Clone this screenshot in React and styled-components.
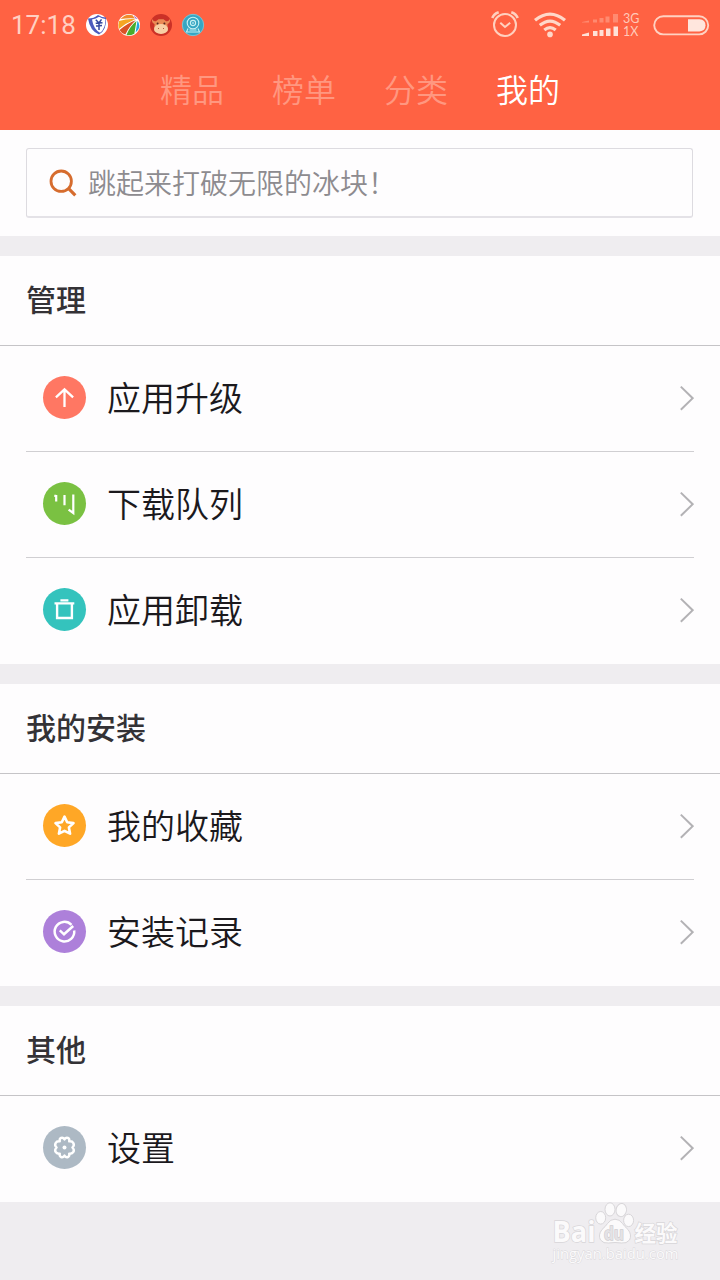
import React from 'react';
import styled, { createGlobalStyle } from 'styled-components';

const GlobalStyle = createGlobalStyle`
  * {
    box-sizing: border-box;
  }
  body {
    margin: 0;
    background: #efedf0;
    font-family: 'Noto Sans CJK SC', sans-serif;
  }
`;

const TABS = ['精品', '榜单', '分类', '我的'];

const SECTIONS = [
  {
    title: '管理',
    items: [
      { label: '应用升级', color: '#ff7763', icon: 'upgrade' },
      { label: '下载队列', color: '#7ac142', icon: 'queue' },
      { label: '应用卸载', color: '#34c3bd', icon: 'uninstall' },
    ],
  },
  {
    title: '我的安装',
    items: [
      { label: '我的收藏', color: '#ffa726', icon: 'favorite' },
      { label: '安装记录', color: '#ad80da', icon: 'history' },
    ],
  },
  {
    title: '其他',
    items: [
      { label: '设置', color: '#adb9c4', icon: 'settings' },
    ],
  },
];

// glyphs drawn inside the 43px round badges
const GLYPHS = {
  upgrade: (
    <path d="M21.5 31V13.8M12.9 21.3L21.5 13.3L30.1 21.3" strokeWidth="2.3" />
  ),
  queue: (
    <path d="M13.2 13V19.4M21.5 13V23.3M30.3 12.6V31L25.6 27.6M11.3 13.8H13.2" strokeWidth="2.2" />
  ),
  uninstall: (
    <path d="M11.5 15.4H31.3M17.4 12.4H25.4M14.1 15.4V30H28.9V15.4" strokeWidth="2.4" />
  ),
  favorite: (
    <path
      d="M21.5 12.6L24.2 18.3L30.5 19.1L25.9 23.4L27.1 29.7L21.5 26.8L15.9 29.7L17.1 23.4L12.5 19.1L18.8 18.3Z"
      strokeWidth="2.6"
      strokeLinejoin="round"
    />
  ),
  history: (
    <path d="M28.5 14.8A9.8 9.8 0 1 0 31.2 20.5M16.8 20.4L21 24.3L30.2 16" strokeWidth="2.5" />
  ),
  settings: (
    <>
      <path
        d="M21.5 13.4C23.5 10.2 27 12 26.2 15.4C30 14.8 32.5 18.4 29.4 21.5C32.5 24.6 30 28.2 26.2 27.6C27 31 23.5 32.8 21.5 29.6C19.5 32.8 16 31 16.8 27.6C13 28.2 10.5 24.6 13.6 21.5C10.5 18.4 13 14.8 16.8 15.4C16 12 19.5 10.2 21.5 13.4Z"
        strokeWidth="2.4"
        strokeLinejoin="round"
      />
      <circle cx="21.5" cy="21.5" r="2" fill="#fff" stroke="none" />
    </>
  ),
};

const AppIcons = () => (
  <AppIconList>
    <svg width="24" height="24" viewBox="0 0 24 24">
      <circle cx="12" cy="12" r="11" fill="#fff" />
      <path d="M3 5.5Q9 5.5 13 2Q17 4.5 21 4.5Q22 17 14 21.5Q5 18 3 5.5Z" fill="#4c5bbd" />
      <path d="M7 6.5Q11 5.8 14 3.8Q17 5.8 20.5 6Q20.5 16 15 19.8Q8.5 16 7 6.5Z" fill="#fff" />
      <path d="M10.8 6.8L14 10L16.5 6.3M10.7 10.2L17.5 9.7M11 13L17 12.5M14 10V17" stroke="#34489f" strokeWidth="1.5" fill="none" />
    </svg>
    <svg width="24" height="24" viewBox="0 0 24 24">
      <circle cx="12" cy="12" r="11" fill="#fff" />
      <path d="M3.5 6Q9 0 15.5 2.3L18 5.5Q11 5 3.5 6Z" fill="#ef8b2c" />
      <path d="M2 8Q11 5.5 18.3 6.3Q9 10 1.8 16Q.7 12 2 8Z" fill="#f5a623" />
      <path d="M2.5 17Q11 10 18.8 7.3Q12.5 13 8.3 21.5Q4 20 2.5 17Z" fill="#d95326" />
      <path d="M9.5 22Q13 13 19.5 8L17.3 20.7Q13 23 9.5 22Z" fill="#46ac2e" />
      <path d="M18.6 19.5L20.5 7.8Q25 14 18.6 19.5Z" fill="#22a7dd" />
      <path d="M16.8 2.6L20.7 6L18.4 5.6Z" fill="#9b5cc5" />
    </svg>
    <svg width="24" height="24" viewBox="0 0 24 24">
      <circle cx="12" cy="12" r="11" fill="#cb3127" />
      <path d="M3 6Q5 9.5 7.5 7.8L9.5 6.3H14.5L16.5 7.8Q19 9.5 21 6Q21.5 10 18.5 11V18Q12 23 5.5 18V11Q2.5 10 3 6Z" fill="#eb8a55" />
      <ellipse cx="12" cy="16" rx="7" ry="5" fill="#f8cfa4" />
      <circle cx="8.6" cy="10.5" r="1" fill="#56281e" />
      <circle cx="15.4" cy="10.5" r="1" fill="#56281e" />
      <path d="M9.5 15V16M14.5 15V16" stroke="#b35a3e" strokeWidth="1" />
    </svg>
    <svg width="24" height="24" viewBox="0 0 24 24" fill="none">
      <circle cx="12" cy="12" r="10.7" fill="#35a6c3" stroke="#79c3d3" />
      <circle cx="12" cy="10" r="5.8" stroke="#c8f0f2" strokeWidth="1.1" />
      <circle cx="12" cy="10" r="2.6" stroke="#c8f0f2" strokeWidth="1.1" />
      <circle cx="12" cy="10" r=".8" fill="#fff" />
      <path d="M7 15.5L5.5 19H18.5L17 15.5M8.5 17H15.5" stroke="#c8f0f2" strokeWidth="1.1" />
    </svg>
  </AppIconList>
);

const AlarmIcon = () => (
  <svg width="28" height="28" viewBox="0 0 28 28" fill="none" stroke="#ffd0bf" strokeWidth="2">
    <circle cx="14" cy="15" r="11" />
    <path d="M9.3 12.7L14 17L19.2 12.7" />
    <path d="M1.3 8Q2.8 3.8 7.7 2.2M20.3 2.2Q25.2 3.8 26.7 8" strokeWidth="2.6" />
  </svg>
);

const WifiIcon = () => (
  <svg width="34" height="26" viewBox="0 0 34 26" fill="none" stroke="#ffd8c9" strokeWidth="3.2">
    <path d="M2 8.2Q17 -4 32 8.2M6.8 13.3Q17 4.8 27.2 13.3M11.3 18Q17 13.3 22.7 18" />
    <circle cx="17" cy="22.4" r="2.8" fill="#ffd8c9" stroke="none" />
  </svg>
);

const SignalIcon = () => (
  <svg width="38" height="26" viewBox="0 0 38 26">
    <path
      d="M1 10L8 8.5V10.5H1ZM12 7.5H16V10.5H12ZM18.5 6H22.5V10.5H18.5ZM24.5 4.5H28.5V10.5H24.5ZM32 2H37V10.5H32Z"
      fill="#ff8a70"
    />
    <path
      d="M1 22.5L8 20.5V24H1ZM12 19H16.5V24H12ZM18.5 18H22.5V24H18.5ZM25 16.5H29.5V24H25ZM32.5 14.5H37V24H32.5Z"
      fill="#ffe1d7"
    />
  </svg>
);

const BatteryIcon = () => (
  <svg width="57" height="21" viewBox="0 0 57 21">
    <rect x="1.2" y="1.2" width="54" height="18.2" rx="9.1" fill="none" stroke="#ffd2c2" strokeWidth="1.9" />
    <path d="M35 4.2H46.5Q52.5 4.6 52.5 10.3Q52.5 16 46.5 16.4H35Z" fill="#ffe6dd" />
  </svg>
);

const SearchIcon = () => (
  <svg width="28" height="28" viewBox="0 0 28 28" fill="none" stroke="#d66c2e">
    <circle cx="12.2" cy="12.2" r="10.2" strokeWidth="2.8" />
    <path d="M19.2 19.2L26.3 26.3" strokeWidth="3.2" />
  </svg>
);

const Chevron = () => (
  <svg width="16" height="26" viewBox="0 0 16 26" fill="none" stroke="#b3b2b5" strokeWidth="2">
    <path d="M2.8 1.6L14.7 13.2L2.8 24.8" />
  </svg>
);

const BaiduMark = () => (
  <Watermark>
    <svg width="136" height="64" viewBox="0 0 136 64" fill="#fbfafb" stroke="#d8d6d9" strokeWidth="1">
      <ellipse cx="54.7" cy="15.8" rx="5" ry="6.3" />
      <ellipse cx="64" cy="7.4" rx="5" ry="6.6" />
      <ellipse cx="75.3" cy="8.1" rx="5.2" ry="6.6" transform="rotate(10 75.3 8.1)" />
      <ellipse cx="82.6" cy="18.4" rx="5" ry="6.2" />
      <path d="M69 17.2Q73.5 17.2 76.5 21.5Q78.5 24.5 82 27.5Q86.2 33 83.5 38Q80.5 41.8 75.5 41Q69 40 62.5 41Q57.5 41.8 54.5 38Q51.8 33 56 27.5Q59.5 24.5 61.5 21.5Q64.5 17.2 69 17.2Z" />
      <WatermarkText x="6.5" y="40" textLength="43" lengthAdjust="spacingAndGlyphs" $size={28}>Bai</WatermarkText>
      <WatermarkText x="58" y="38" textLength="20" lengthAdjust="spacingAndGlyphs" $size={18} $inner>du</WatermarkText>
      <WatermarkText x="88.5" y="39" textLength="43" lengthAdjust="spacingAndGlyphs" $size={22}>经验</WatermarkText>
      <WatermarkText x="6.5" y="56.5" textLength="126" lengthAdjust="spacingAndGlyphs" $size={14} $light>jingyan.baidu.com</WatermarkText>
    </svg>
  </Watermark>
);

const Section = ({ title, items }) => (
  <SectionBox>
    <SectionTitle>{title}</SectionTitle>
    <List>
      {items.map(item => (
        <Row key={item.label}>
          <Badge color={item.color}>
            <svg width="43" height="43" viewBox="0 0 43 43" fill="none" stroke="#fff">
              {GLYPHS[item.icon]}
            </svg>
          </Badge>
          <RowLabel>{item.label}</RowLabel>
          <Chevron />
        </Row>
      ))}
    </List>
  </SectionBox>
);

const App = () => {
  return (
    <Wrapper>
      <GlobalStyle />
      <Header>
        <StatusBar>
          <Clock>17:18</Clock>
          <AppIcons />
          <StatusRight>
            <AlarmIcon />
            <WifiIcon />
            <Network>
              <SignalIcon />
              <NetworkType>
                <span>3G</span>
                <span>1X</span>
              </NetworkType>
            </Network>
            <BatteryIcon />
          </StatusRight>
        </StatusBar>
        <Tabs>
          {TABS.map(tab => (
            <Tab key={tab} $active={tab === '我的'}>{tab}</Tab>
          ))}
        </Tabs>
      </Header>
      <SearchArea>
        <SearchBox>
          <SearchIcon />
          <Placeholder>跳起来打破无限的冰块！</Placeholder>
        </SearchBox>
      </SearchArea>
      {SECTIONS.map(section => <Section key={section.title} {...section} />)}
      <BaiduMark />
    </Wrapper>
  );
};

export default App;

const Wrapper = styled.div`
  position: relative;
  display: flex;
  flex-direction: column;
  gap: 20px;
  width: 720px;
  height: 1280px;
  overflow: hidden;
  background: #efedf0;
`;

const Header = styled.div`
  height: 130px;
  margin-bottom: -20px;
  background: #ff6243;
`;

const StatusBar = styled.div`
  display: flex;
  align-items: center;
  height: 50px;
  padding: 0 10px 0 11px;
`;

const Clock = styled.div`
  width: 74px;
  color: #ffd0c2;
  font-family: Roboto, sans-serif;
  font-size: 26px;
  line-height: 50px;
`;

const AppIconList = styled.div`
  display: flex;
  gap: 8px;
`;

const StatusRight = styled.div`
  display: flex;
  align-items: center;
  margin-left: auto;
  > svg:first-child {
    margin: 0 14px 2px 0;
  }
`;

const Network = styled.div`
  display: flex;
  align-items: center;
  gap: 4px;
  margin: 0 12px 0 14px;
`;

const NetworkType = styled.div`
  display: flex;
  flex-direction: column;
  width: 18px;
  color: #ffc9b9;
  font-family: Lato, sans-serif;
  font-size: 12.5px;
  line-height: 13px;
`;

const Tabs = styled.div`
  display: flex;
  justify-content: center;
  gap: 48px;
  height: 80px;
`;

const Tab = styled.div`
  color: ${props => props.$active ? '#fff' : '#ff9780'};
  font-size: 32px;
  font-weight: 350;
  line-height: 76px;
`;

const SearchArea = styled.div`
  height: 106px;
  padding: 18px 27px 18px 26px;
  background: #fefdfe;
`;

const SearchBox = styled.div`
  display: flex;
  align-items: center;
  height: 70px;
  padding-left: 22px;
  border: 1px solid #dddbe0;
  border-bottom: 2px solid #e4e2e7;
  border-radius: 3px;
`;

const Placeholder = styled.div`
  margin-left: 11px;
  padding-bottom: 2px;
  color: #8d8b8f;
  font-size: 28px;
  font-weight: 350;
  line-height: 64px;
`;

const SectionBox = styled.div`
  background: #fefdfe;
`;

const SectionTitle = styled.div`
  height: 90px;
  padding-left: 26px;
  border-bottom: 1px solid #c5c4c7;
  color: #343236;
  font-size: 30px;
  font-weight: 500;
  line-height: 84px;
`;

const List = styled.div`
  padding: 0 26px;
`;

const Row = styled.div`
  display: flex;
  align-items: center;
  height: 106px;
  padding-left: 16.5px;
  padding-bottom: 2px;
  border-bottom: 1px solid #d0cfd2;
  &:last-child {
    border-bottom-color: transparent;
  }
`;

const Badge = styled.div`
  width: 43px;
  height: 43px;
  border-radius: 50%;
  background: ${props => props.color};
  svg {
    display: block;
  }
`;

const RowLabel = styled.div`
  flex: 1;
  margin-left: 21.5px;
  padding-bottom: 2px;
  color: #1b191d;
  font-size: 34px;
  font-weight: 350;
  line-height: 100px;
`;

const Watermark = styled.div`
  position: absolute;
  right: 38px;
  bottom: 14px;
  width: 136px;
  height: 64px;
`;

const WatermarkText = styled.text`
  font-family: 'Open Sans', 'Noto Sans CJK SC', sans-serif;
  font-size: ${props => props.$size}px;
  font-weight: ${props => props.$light ? 400 : 700};
  fill: ${props => props.$inner ? '#e4e2e5' : '#fbfafb'};
  stroke: ${props => props.$inner ? '#cfcdd0' : '#d8d6d9'};
  stroke-width: ${props => props.$light ? 0.8 : 1.4};
  paint-order: stroke;
`;
